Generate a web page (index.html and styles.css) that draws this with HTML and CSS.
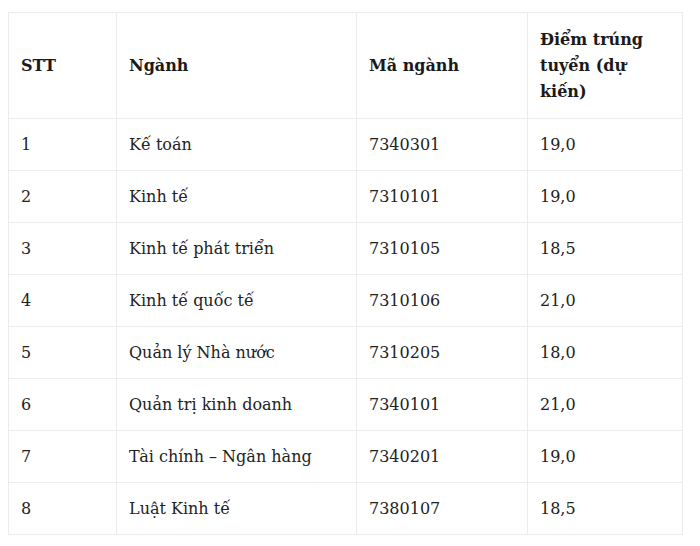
FILE: index.html
```html
<!DOCTYPE html>
<html lang="vi">
<head>
<meta charset="utf-8">
<link rel="stylesheet" href="styles.css">
</head>
<body>
<table class="score-table">
  <colgroup>
    <col class="c1"><col class="c2"><col class="c3"><col class="c4">
  </colgroup>
  <thead>
    <tr><th>STT</th><th>Ngành</th><th>Mã ngành</th><th>Điểm trúng tuyển (dự kiến)</th></tr>
  </thead>
  <tbody>
    <tr><td>1</td><td>Kế toán</td><td>7340301</td><td>19,0</td></tr>
    <tr><td>2</td><td>Kinh tế</td><td>7310101</td><td>19,0</td></tr>
    <tr><td>3</td><td>Kinh tế phát triển</td><td>7310105</td><td>18,5</td></tr>
    <tr><td>4</td><td>Kinh tế quốc tế</td><td>7310106</td><td>21,0</td></tr>
    <tr><td>5</td><td>Quản lý Nhà nước</td><td>7310205</td><td>18,0</td></tr>
    <tr><td>6</td><td>Quản trị kinh doanh</td><td>7340101</td><td>21,0</td></tr>
    <tr><td>7</td><td>Tài chính – Ngân hàng</td><td>7340201</td><td>19,0</td></tr>
    <tr><td>8</td><td>Luật Kinh tế</td><td>7380107</td><td>18,5</td></tr>
  </tbody>
</table>
</body>
</html>
```
FILE: styles.css
```css
body {
  margin: 12px 8px 8px 8px;
  background: #fff;
  font-family: "DejaVu Serif", "Liberation Serif", serif;
  color: #222;
}
.score-table {
  border-collapse: collapse;
  table-layout: fixed;
  width: 674px;
  font-size: 16px;
  line-height: 26px;
}
.c1 { width: 108px; }
.c2 { width: 240px; }
.c3 { width: 171px; }
.c4 { width: 155px; }
.score-table th,
.score-table td {
  border: 1px solid #ececec;
  padding: 13px 12px 12px 12px;
  text-align: left;
  vertical-align: middle;
}
.score-table th {
  padding-top: 14px;
  padding-bottom: 13px;
  font-weight: bold;
  color: #1a1a1a;
}
```
